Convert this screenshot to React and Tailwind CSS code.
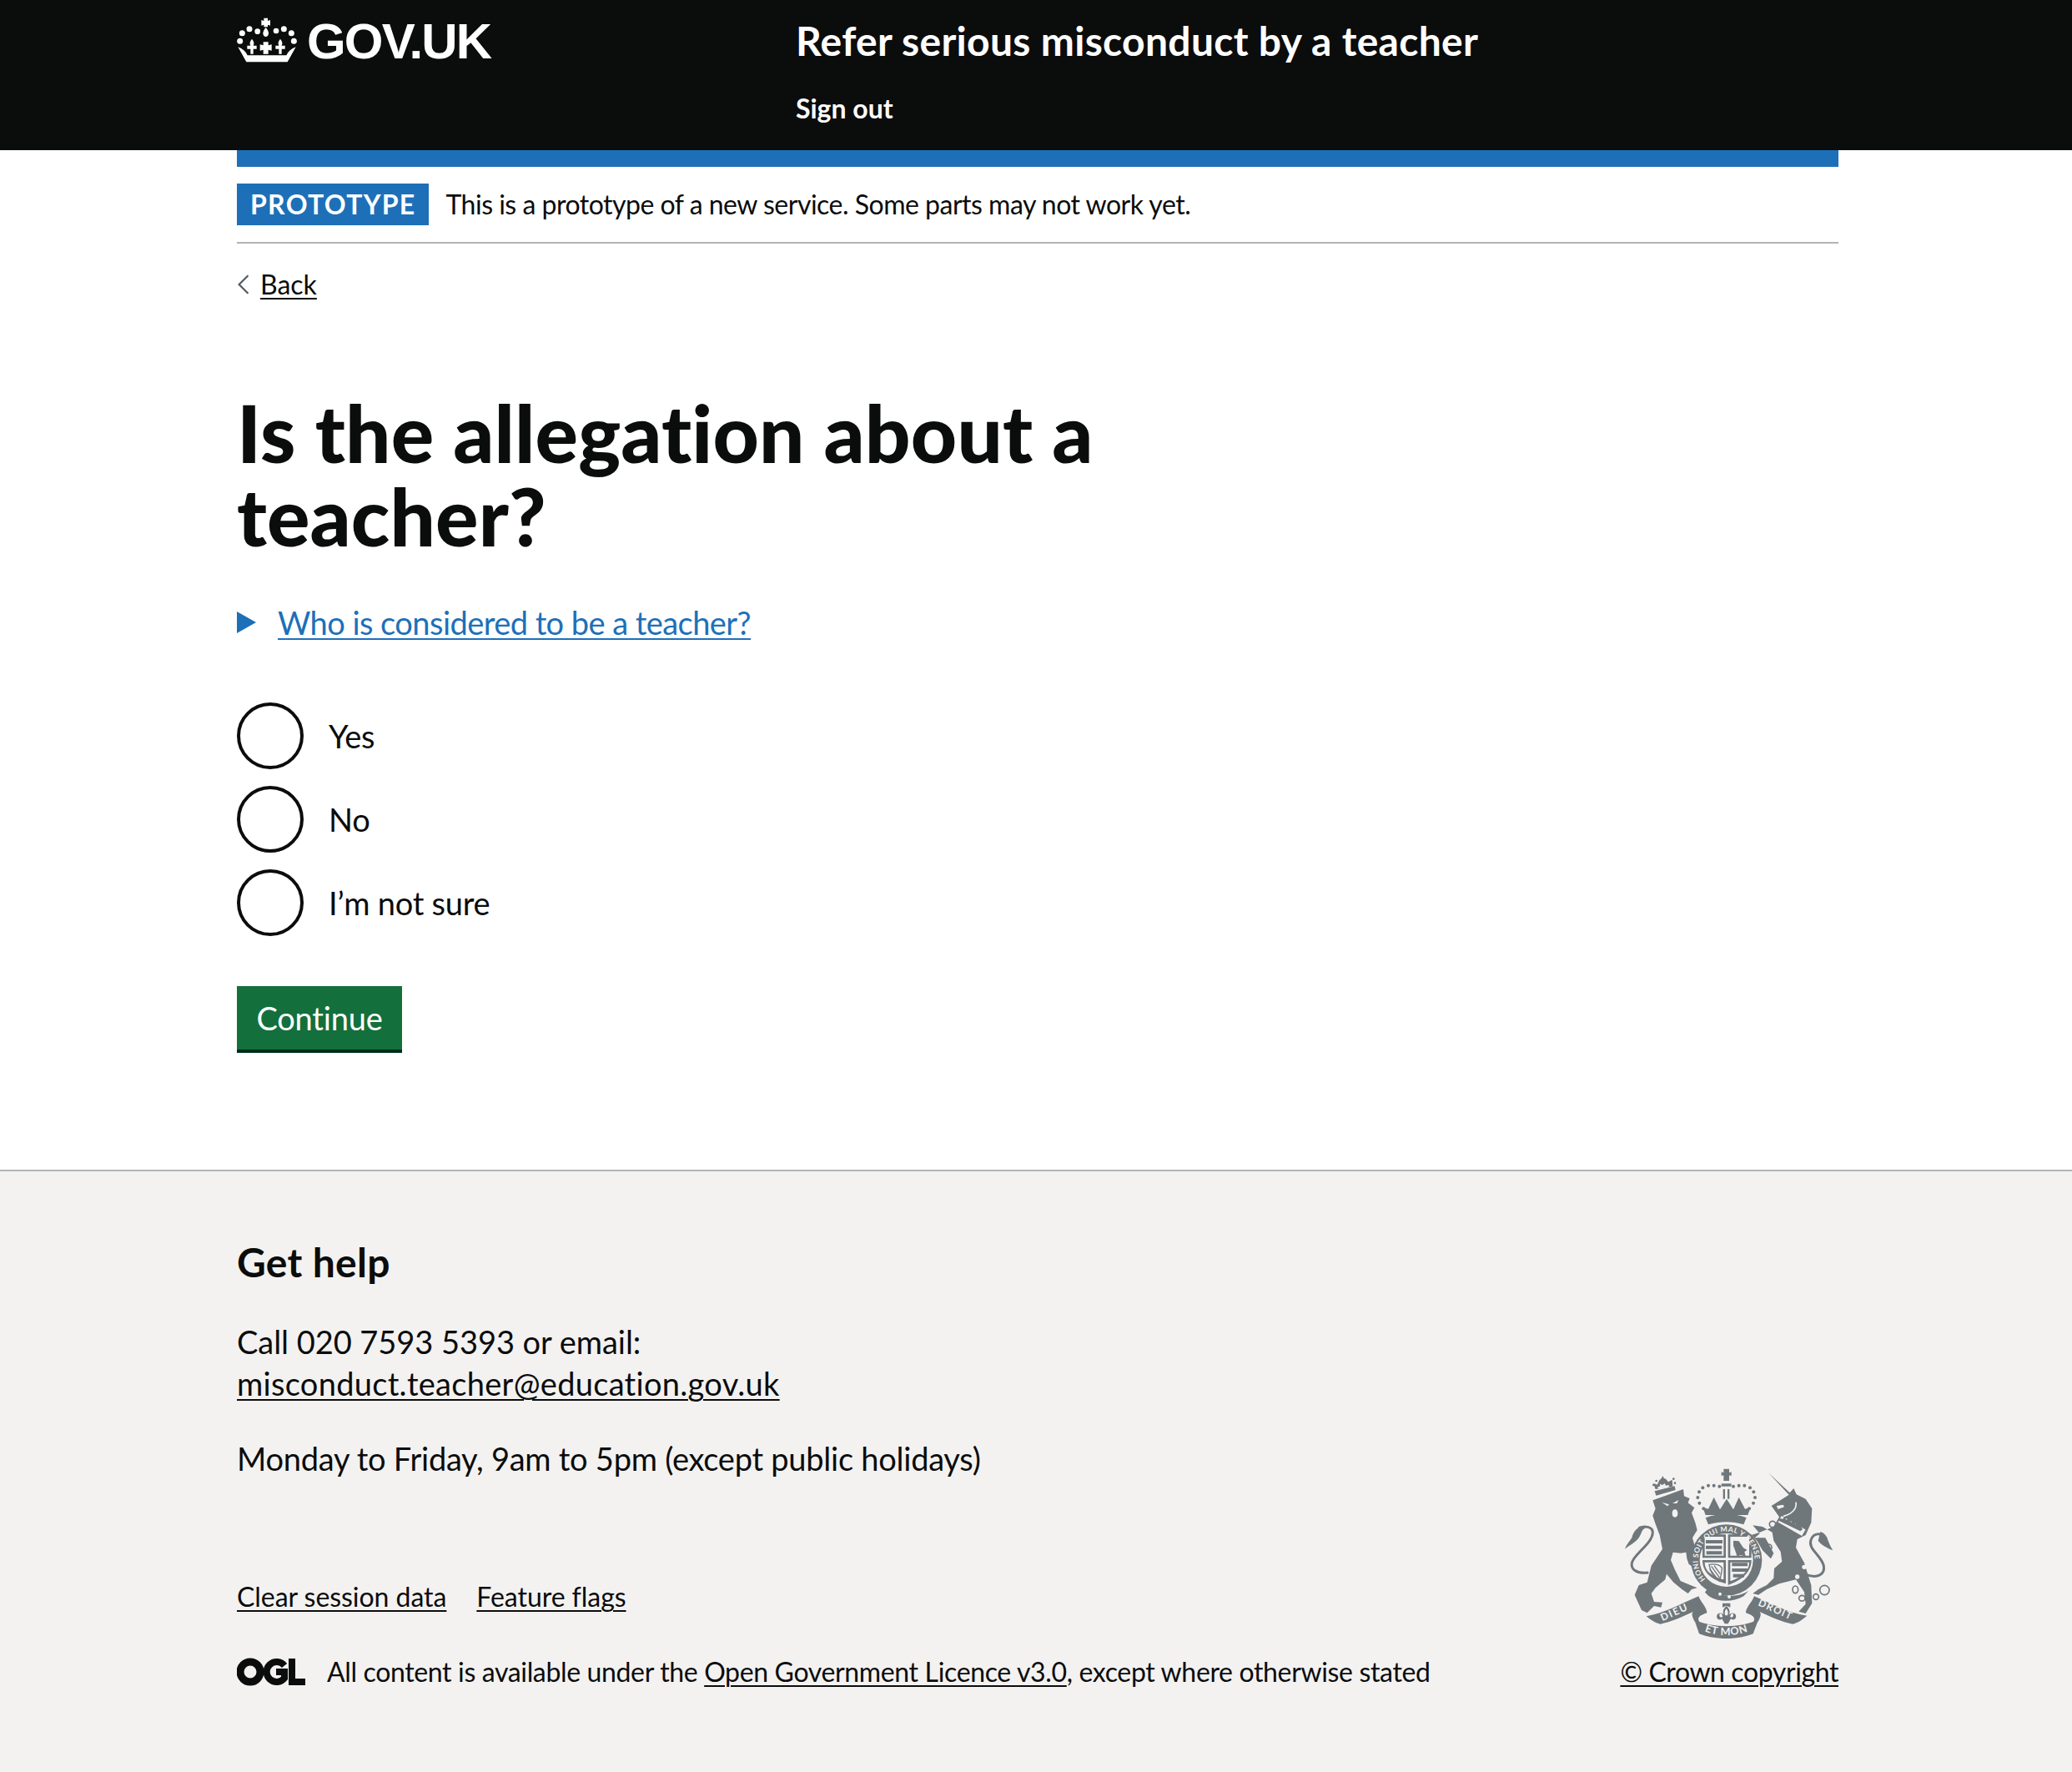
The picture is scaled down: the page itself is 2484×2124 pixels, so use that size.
const LINK = "underline underline-offset-[4px] decoration-[2px]";

const Crown = () => (
  <svg viewBox="24 20 216 162" className="w-[72px] h-[54px] shrink-0 -mt-[4px]" fill="#fff">
    <path d="M121 22h14v10l9-3v20l-9-3v8h-14v-8l-9 3V29l9 3z" />
    <path d="M128 56c6 7 10 14 10 21 0 7-4 12-10 12s-10-5-10-12c0-7 4-14 10-21z" />
    <circle cx="43" cy="76" r="10.5" />
    <circle cx="69" cy="61" r="10.5" />
    <circle cx="98" cy="70" r="10" />
    <circle cx="165" cy="68" r="10" />
    <circle cx="193" cy="61" r="10.5" />
    <circle cx="220" cy="76" r="10.5" />
    <circle cx="35" cy="105" r="10.5" />
    <circle cx="229" cy="105" r="10.5" />
    <path d="M78 97c8 9 9 16 5 24h12v12H83v18h-10v-18H61v-12h12c-4-8-3-15 5-24z" />
    <path d="M180 97c8 9 9 16 5 24h12v12h-12v18h-10v-18h-12v-12h12c-4-8-3-15 5-24z" />
    <path d="M119 108h18v12l12-3v22l-12-3v15h-18v-15l-12 3v-22l12 3z" />
    <path d="M28 126c16 6 28 16 34 30h140c6-14 18-24 34-30l-30 54H58z" />
  </svg>
);

const CoatOfArms = () => (
  <svg viewBox="145 90 750 612" className="w-[250px] h-[204px] mb-[20px] block">
    <defs>
      <path id="garter" d="M438 492A102 102 0 1 1 582 492" />
      <path id="motto" d="M420 672Q510 708 600 672" />
    </defs>
    <g fill="#6f777b">
      {/* lion */}
      <path d="M245 205L300 185L355 165L358 190L378 198L372 214L395 232L385 250L398 285L405 312L388 340L412 425L415 445L395 448L375 435L368 415L365 392L345 395L318 392L310 420L325 455L345 495L375 508L405 520L385 525L372 540L350 525L320 500L295 470L290 490L255 520L240 540L250 570L280 572L275 590L250 585L225 610L205 600L180 545L195 510L225 500L240 440L280 380L270 330L255 290L245 260L255 235z" />
      <path d="M230 465C190 470 165 455 170 430C175 400 245 360 245 320C245 300 215 295 195 305" fill="none" stroke="#6f777b" strokeWidth="9" />
      <path d="M218 298C195 296 175 315 170 340C160 355 150 365 145 380C165 365 185 355 195 340C205 325 205 310 218 305z" />
      <ellipse cx="325" cy="252" rx="10" ry="14" fill="#f3f2f1" />
      <path d="M278 212l26 8-6 6zM338 204l-22 12 16 0z" fill="#f3f2f1" />
      {/* lion crown */}
      <path d="M252 172l72-18 3 14-70 20z" />
      <path d="M255 165l-8-22 14 6 8-16 8-8 4-8 4 8 8 4 8 10 14-8 2 24z" />
      <g>
        <circle cx="248" cy="150" r="4" /><circle cx="258" cy="135" r="4" /><circle cx="320" cy="128" r="4" /><circle cx="325" cy="143" r="4" />
      </g>
      <path d="M262 158l10-4-2-8 10 4 8-6 4 8 12-2-2 8-36 6z" fill="#f3f2f1" />
      {/* royal crown */}
      <path d="M500 92h20v14l8-3v14l-8-2v20h-20v-20l-8 2v-14l8 3z" />
      <rect x="492" y="145" width="36" height="10" />
      <rect x="498" y="165" width="7" height="35" />
      <rect x="514" y="165" width="7" height="35" />
      {[[428,235],[413,215],[407,195],[412,175],[425,160],[445,152],[465,152],[485,155],[535,155],[555,152],[575,152],[595,160],[608,175],[613,195],[607,215],[592,235]].map(([x, y]) => (
        <circle key={x + '-' + y} cx={x} cy={y} r="6" />
      ))}
      <path d="M425 230l20 6 20-42 22 44 24-38 24 38 20-44 22 42 20-6-10 28H435z" />
      <path d="M435 268C480 250 540 250 582 268L572 292C530 280 490 280 445 292z" />
      {/* unicorn */}
      <path d="M660 105L738 178L752 162L762 184L795 200L818 235L815 285L795 330L765 345L760 375L790 430L815 510L818 575L795 612L770 605L795 578L790 535L760 490L700 505L655 525L625 545L605 540L625 525L655 510L680 485L682 450L710 425L705 390L680 350L675 320L640 300L605 295L630 325L612 340L650 340L680 395L670 415L640 385L620 350L600 330L630 320L680 300L700 265L672 225L735 185z" />
      <path d="M790 470C840 490 865 470 860 440C850 400 800 380 815 345C825 320 860 320 870 345" fill="none" stroke="#6f777b" strokeWidth="9" />
      <path d="M848 318C875 325 875 360 893 385C870 375 850 365 840 350z" />
      <path d="M702 272L788 322" stroke="#f3f2f1" strokeWidth="26" fill="none" />
      <path d="M702 270l12 2 4-10 8 14 10-8 6 16 12-6 4 14 14-4 12 22-8 6-78-38z" />
      <path d="M760 212C765 235 745 255 715 262" stroke="#f3f2f1" strokeWidth="5" fill="none" />
      <path d="M690 225l24-4 4 8-22 8z" fill="#f3f2f1" />
      <circle cx="796" cy="398" r="10" fill="#f3f2f1" />
      <circle cx="790" cy="445" r="8" fill="#f3f2f1" />
      <circle cx="765" cy="480" r="8" fill="#f3f2f1" />
      <g fill="none" stroke="#6f777b" strokeWidth="5">
        <ellipse cx="676" cy="291" rx="11" ry="11" />
        <ellipse cx="662" cy="374" rx="11" ry="11" />
        <ellipse cx="758" cy="526" rx="10" ry="13" />
        <ellipse cx="782" cy="557" rx="11" ry="10" />
        <circle cx="832" cy="552" r="10" />
        <circle cx="863" cy="528" r="17" />
      </g>
      {/* shield */}
      <circle cx="510" cy="420" r="128" />
      <circle cx="510" cy="420" r="96" fill="#f3f2f1" />
      <path d="M424 328h84v84h-84zM516 328h84v84h-84zM424 420h84v84c-50-12-84-40-84-84zM516 420h84c0 44-34 72-84 90z" />
      <g fill="#f3f2f1">
        <path d="M432 336h68v68h-68zM524 336h68v68h-68z" />
        <path d="M432 428h68v62c-36-10-68-28-68-62zM524 428h68c0 34-30 54-68 68z" />
      </g>
      <path d="M436 348h60v12h-60zM436 368h58v12h-58zM438 388h56v12h-56z" />
      <path d="M530 430h56v12h-56zM530 450h56v12h-56zM534 470h40v12h-40z" />
      <path d="M535 350l20 2 16 24 14 8-10 6 4 16-20-4-10 6-8-24-6-16z" />
      <g stroke="#6f777b" strokeWidth="4" fill="none">
        <path d="M448 436c20-4 40 0 46 12 0 18-6 34-8 48-16-10-34-30-38-60z" />
        <path d="M456 442l30 42M466 440l22 30M450 452l28 36" />
      </g>
      <path d="M440 525c40 25 105 35 150 5l-18 20c-40 22-90 22-125 0l-14-14z" />
      <circle cx="487" cy="542" r="6" fill="#f3f2f1" />
      <circle cx="520" cy="552" r="6" fill="#f3f2f1" />
      {/* ribbon */}
      <path d="M222 622C290 610 350 575 410 550C420 575 440 590 440 610C410 620 400 630 420 652L395 640C385 620 385 612 390 606C350 625 310 642 272 650C250 645 235 632 222 622z" />
      <path d="M800 620C730 610 670 575 610 550C600 575 580 590 580 610C610 620 620 630 600 652L625 640C635 620 635 612 630 606C670 625 710 642 748 650C770 645 785 632 800 620z" />
      <path d="M395 635C470 665 550 665 625 635L606 685C550 708 470 708 412 685z" />
      <path d="M510 575h14v15l-14-6-14 6v-15z" />
      <path d="M510 585c14 12 14 24 8 34 6-10 22-12 26 0 4 14-12 20-18 12l-10 18-6 0-6 0-10-18c-6 8-22 2-18-12 4-12 20-10 26 0-6-10-6-22 8-34z" fill="#6f777b" />
      <path d="M510 595c7 8 7 16 4 24h-8c-3-8-3-16 4-24zM488 612c5 0 7 6 9 12l-8 2c-5-4-6-12-1-14zM532 612c-5 0-7 6-9 12l8 2c5-4 6-12 1-14z" fill="#f3f2f1" />
    </g>
    <g fill="#f3f2f1" fontFamily="Lato,sans-serif" fontWeight="700">
      <text fontSize="26" letterSpacing="1.5"><textPath href="#garter" startOffset="1%">HONI SOIT QUI MAL Y PENSE</textPath></text>
      <text fontSize="38" letterSpacing="2"><textPath href="#motto" startOffset="50%" textAnchor="middle">ET MON</textPath></text>
      <text x="280" y="640" fontSize="36" letterSpacing="5" transform="rotate(-24 280 640)">DIEU</text>
      <text x="622" y="582" fontSize="36" letterSpacing="4" transform="rotate(24 622 582)">DROIT</text>
    </g>
  </svg>
);

const Ogl = () => (
  <svg viewBox="0 0 82 34" className="w-[82px] h-[34px] shrink-0" fill="#0b0c0c">
    <circle cx="16" cy="17" r="12" fill="none" stroke="#0b0c0c" strokeWidth="9" />
    <path d="M57 9.5a12 12 0 1 0 0 15V17H47" fill="none" stroke="#0b0c0c" strokeWidth="8" />
    <path d="M62 1h8v24h12v8H62z" />
  </svg>
);

const Radio = ({ label }) => (
  <div className="flex items-center gap-[30px] mb-[20px]">
    <span className="w-[80px] h-[80px] rounded-full border-[4px] border-[#0b0c0c] bg-white shrink-0" />
    <span className="text-[38px] leading-[50px] tracking-[-0.25px] text-[#0b0c0c]">{label}</span>
  </div>
);

export default function App() {
  return (
    <div className="font-['Lato',sans-serif] [font-variant-ligatures:none] bg-white text-[#0b0c0c] min-h-[2124px] flex flex-col">
      <header className="bg-[#0b0c0c] h-[180px] text-white">
        <div className="w-[1920px] ml-[284px] flex pt-[18px]">
          <div className="w-[670px] flex items-center h-[64px] gap-[12px]">
            <Crown />
            <span className="font-['Liberation_Sans',sans-serif] font-bold text-[60px] leading-[64px] tracking-[-1.8px]">GOV.UK</span>
          </div>
          <div>
            <div className="text-[48px] leading-[64px] font-bold tracking-[0.3px] -mt-[1px]">Refer serious misconduct by a teacher</div>
            <div className="text-[32px] leading-[40px] font-bold mt-[29px]">Sign out</div>
          </div>
        </div>
      </header>

      <main className="w-[1920px] ml-[284px] flex-1">
        <div className="h-[20px] bg-[#1d70b8]" />
        <div className="flex items-center gap-[20px] h-[92px] border-b-2 border-[#b1b4b6]">
          <span className="bg-[#1d70b8] text-white font-bold text-[32px] h-[50px] leading-[50px] px-[16px] tracking-[1.3px]">PROTOTYPE</span>
          <span className="text-[32px] tracking-[-0.5px]">This is a prototype of a new service. Some parts may not work yet.</span>
        </div>
        <div className="flex items-center gap-[12px] mt-[29px] h-[40px]">
          <svg viewBox="0 0 14 24" className="w-[16px] h-[26px]" fill="none" stroke="#505a5f" strokeWidth="2"><path d="M12 2L2 12l10 10" /></svg>
          <a className={`text-[32px] leading-[40px] ${LINK}`}>Back</a>
        </div>

        <h1 className="text-[96px] leading-[100px] font-black mt-[107px] w-[1200px] tracking-[0.15px]">Is the allegation about a teacher?</h1>

        <div className="flex items-center gap-[26px] mt-[53px] h-[50px]">
          <span className="w-0 h-0 border-y-[13px] border-y-transparent border-l-[23px] border-l-[#1d70b8]" />
          <a className={`text-[38px] leading-[50px] tracking-[-0.55px] text-[#1d70b8] ${LINK}`}>Who is considered to be a teacher?</a>
        </div>

        <div className="mt-[71px]">
          <Radio label="Yes" />
          <Radio label="No" />
          <Radio label="I’m not sure" />
        </div>

        <button className="mt-[60px] h-[80px] w-[198px] bg-[#13703c] border-b-[4px] border-[#002d18] text-white text-[38px] tracking-[-0.2px] block">Continue</button>
      </main>

      <footer className="h-[722px] bg-[#f3f2f1] border-t-2 border-[#b1b4b6]">
        <div className="w-[1920px] ml-[284px] pt-[79px]">
          <h2 className="text-[48px] leading-[60px] font-bold tracking-[0.3px]">Get help</h2>
          <p className="text-[38px] leading-[50px] mt-[40px]">
            <span className="tracking-[-0.05px]">Call 020 7593 5393 or email:</span><br />
            <a className={`${LINK} tracking-[0.3px]`}>misconduct.teacher@education.gov.uk</a>
          </p>
          <p className="text-[38px] leading-[50px] mt-[40px] tracking-[-0.25px]">Monday to Friday, 9am to 5pm (except public holidays)</p>

          <div className="flex justify-between items-end mt-[-13px]">
            <div>
              <div className="flex gap-[36px] text-[32px] leading-[40px] mt-[126px] tracking-[-0.05px]">
                <a className={LINK}>Clear session data</a>
                <a className={LINK}>Feature flags</a>
              </div>
              <div className="flex items-center gap-[26px] mt-[50px] text-[32px] leading-[40px] tracking-[-0.35px]">
                <Ogl />
                <span>All content is available under the <a className={LINK}>Open Government Licence v3.0</a>, except where otherwise stated</span>
              </div>
            </div>
            <div className="flex flex-col items-center">
              <CoatOfArms />
              <a className={`text-[32px] leading-[40px] tracking-[-0.4px] whitespace-nowrap ${LINK}`}>© Crown copyright</a>
            </div>
          </div>
        </div>
      </footer>
    </div>
  );
}
